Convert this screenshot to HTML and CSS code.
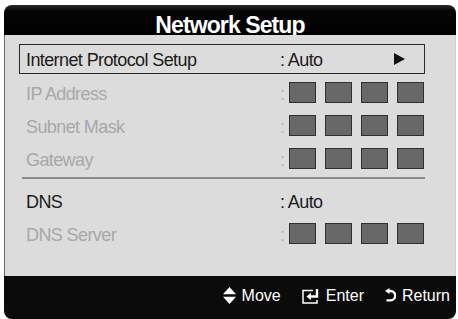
FILE: index.html
```html
<!DOCTYPE html>
<html>
<head>
<meta charset="utf-8">
<title>Network Setup</title>
<link rel="stylesheet" href="styles.css">
</head>
<body>
<div class="panel">
  <div class="header"><h1 class="title">Network Setup</h1></div>
  <div class="content">
    <div class="list">
      <div class="row row-selected">
        <span class="label label-active">Internet Protocol Setup</span>
        <span class="value"><span class="value-text">: Auto</span>
          <svg class="arrow" width="11" height="12" viewBox="0 0 11 12"><polygon points="0,0 11,6 0,12" fill="#111"/></svg>
        </span>
      </div>
      <div class="row">
        <span class="label label-dim">IP Address</span>
        <span class="value"><span class="colon-dim">:</span><span class="boxes"><i class="box"></i><i class="box"></i><i class="box"></i><i class="box"></i></span></span>
      </div>
      <div class="row">
        <span class="label label-dim">Subnet Mask</span>
        <span class="value"><span class="colon-dim">:</span><span class="boxes"><i class="box"></i><i class="box"></i><i class="box"></i><i class="box"></i></span></span>
      </div>
      <div class="row">
        <span class="label label-dim">Gateway</span>
        <span class="value"><span class="colon-dim">:</span><span class="boxes"><i class="box"></i><i class="box"></i><i class="box"></i><i class="box"></i></span></span>
      </div>
      <div class="separator"></div>
      <div class="row">
        <span class="label label-active">DNS</span>
        <span class="value"><span class="value-text">: Auto</span></span>
      </div>
      <div class="row">
        <span class="label label-dim">DNS Server</span>
        <span class="value"><span class="colon-dim">:</span><span class="boxes"><i class="box"></i><i class="box"></i><i class="box"></i><i class="box"></i></span></span>
      </div>
    </div>
  </div>
  <div class="footer">
    <span class="hint">
      <svg class="icon" width="13" height="17" viewBox="0 0 13 17"><polygon points="6.5,0 13,7.3 0,7.3" fill="#fff"/><polygon points="0,9.7 13,9.7 6.5,17" fill="#fff"/></svg>
      <span>Move</span>
    </span>
    <span class="hint">
      <svg class="icon" width="18" height="16" viewBox="0 0 18 16"><path d="M11 2.5 H1 V15 H15 V12" fill="none" stroke="#fff" stroke-width="1.5"/><path d="M15 1 V8.5 H8" fill="none" stroke="#fff" stroke-width="2.4"/><polygon points="4.5,8.5 9,4.8 9,12.2" fill="#fff"/></svg>
      <span>Enter</span>
    </span>
    <span class="hint">
      <svg class="icon" width="11" height="15" viewBox="0 0 11 15"><path d="M3.5 3 H5.5 A4.7 4.7 0 0 1 5.5 12.4 H1.5" fill="none" stroke="#fff" stroke-width="2.4"/><polygon points="0,3 4.5,0 4.5,6" fill="#fff"/></svg>
      <span>Return</span>
    </span>
  </div>
</div>
</body>
</html>
```
FILE: styles.css
```css
html, body {
  margin: 0;
  padding: 0;
  background: #ffffff;
  height: 319px;
  overflow: hidden;
}

body {
  font-family: "Liberation Sans", Arial, Helvetica, sans-serif;
}

.panel {
  margin: 5px 0 0 4px;
  width: 452px;
  height: 314px;
  border-radius: 8px;
  overflow: hidden;
  display: flex;
  flex-direction: column;
  background: #dcdcdc;
}

.header {
  height: 30px;
  flex: none;
  background: linear-gradient(#2a2a2a 0px, #050505 6px, #000 100%);
  text-align: center;
}

.title {
  margin: 0;
  font-size: 23px;
  font-weight: bold;
  letter-spacing: -0.9px;
  line-height: 40px;
  color: #ffffff;
}

.content {
  flex: 1;
  background: #dcdcdc;
  border-left: 1px solid #6a6a6a;
  border-right: 1px solid #cfcfcf;
}

.list {
  margin-left: 14px;
  width: 406px;
  padding-top: 9px;
}

.row {
  display: flex;
  align-items: center;
  height: 33px;
  box-sizing: border-box;
  border: 1px solid transparent;
  font-size: 18px;
  letter-spacing: -0.6px;
}

.row-selected {
  height: 30px;
  margin-bottom: 2px;
  border: 1px solid #2a2a2a;
}

.label {
  width: 254px;
  padding-left: 6px;
  padding-top: 3px;
  flex: none;
}

.label-active {
  color: #1b1b1b;
}

.label-dim {
  color: #a8a8a8;
}

.value {
  flex: 1;
  display: flex;
  align-items: center;
  height: 100%;
}

.value-text {
  color: #1b1b1b;
  padding-top: 3px;
}

.arrow {
  margin-left: auto;
  margin-right: 19px;
}

.colon-dim {
  color: #b4b4b4;
  padding-top: 3px;
}

.boxes {
  margin-left: auto;
  display: flex;
  gap: 9px;
}

.box {
  display: block;
  width: 27px;
  height: 21px;
  box-sizing: border-box;
  background: #686868;
  border: 1px solid #2f2f2f;
}

.separator {
  height: 2px;
  margin: 2px 0 5px 3px;
  background: #8a8a8a;
}

.footer {
  flex: none;
  height: 43px;
  box-sizing: border-box;
  padding: 0 6px 4px 0;
  background: #0b0b0b;
  display: flex;
  align-items: center;
  justify-content: flex-end;
  gap: 21px;
  color: #ffffff;
  font-size: 16px;
}

.hint {
  display: flex;
  align-items: center;
  gap: 6px;
}

.icon {
  display: block;
}
```
